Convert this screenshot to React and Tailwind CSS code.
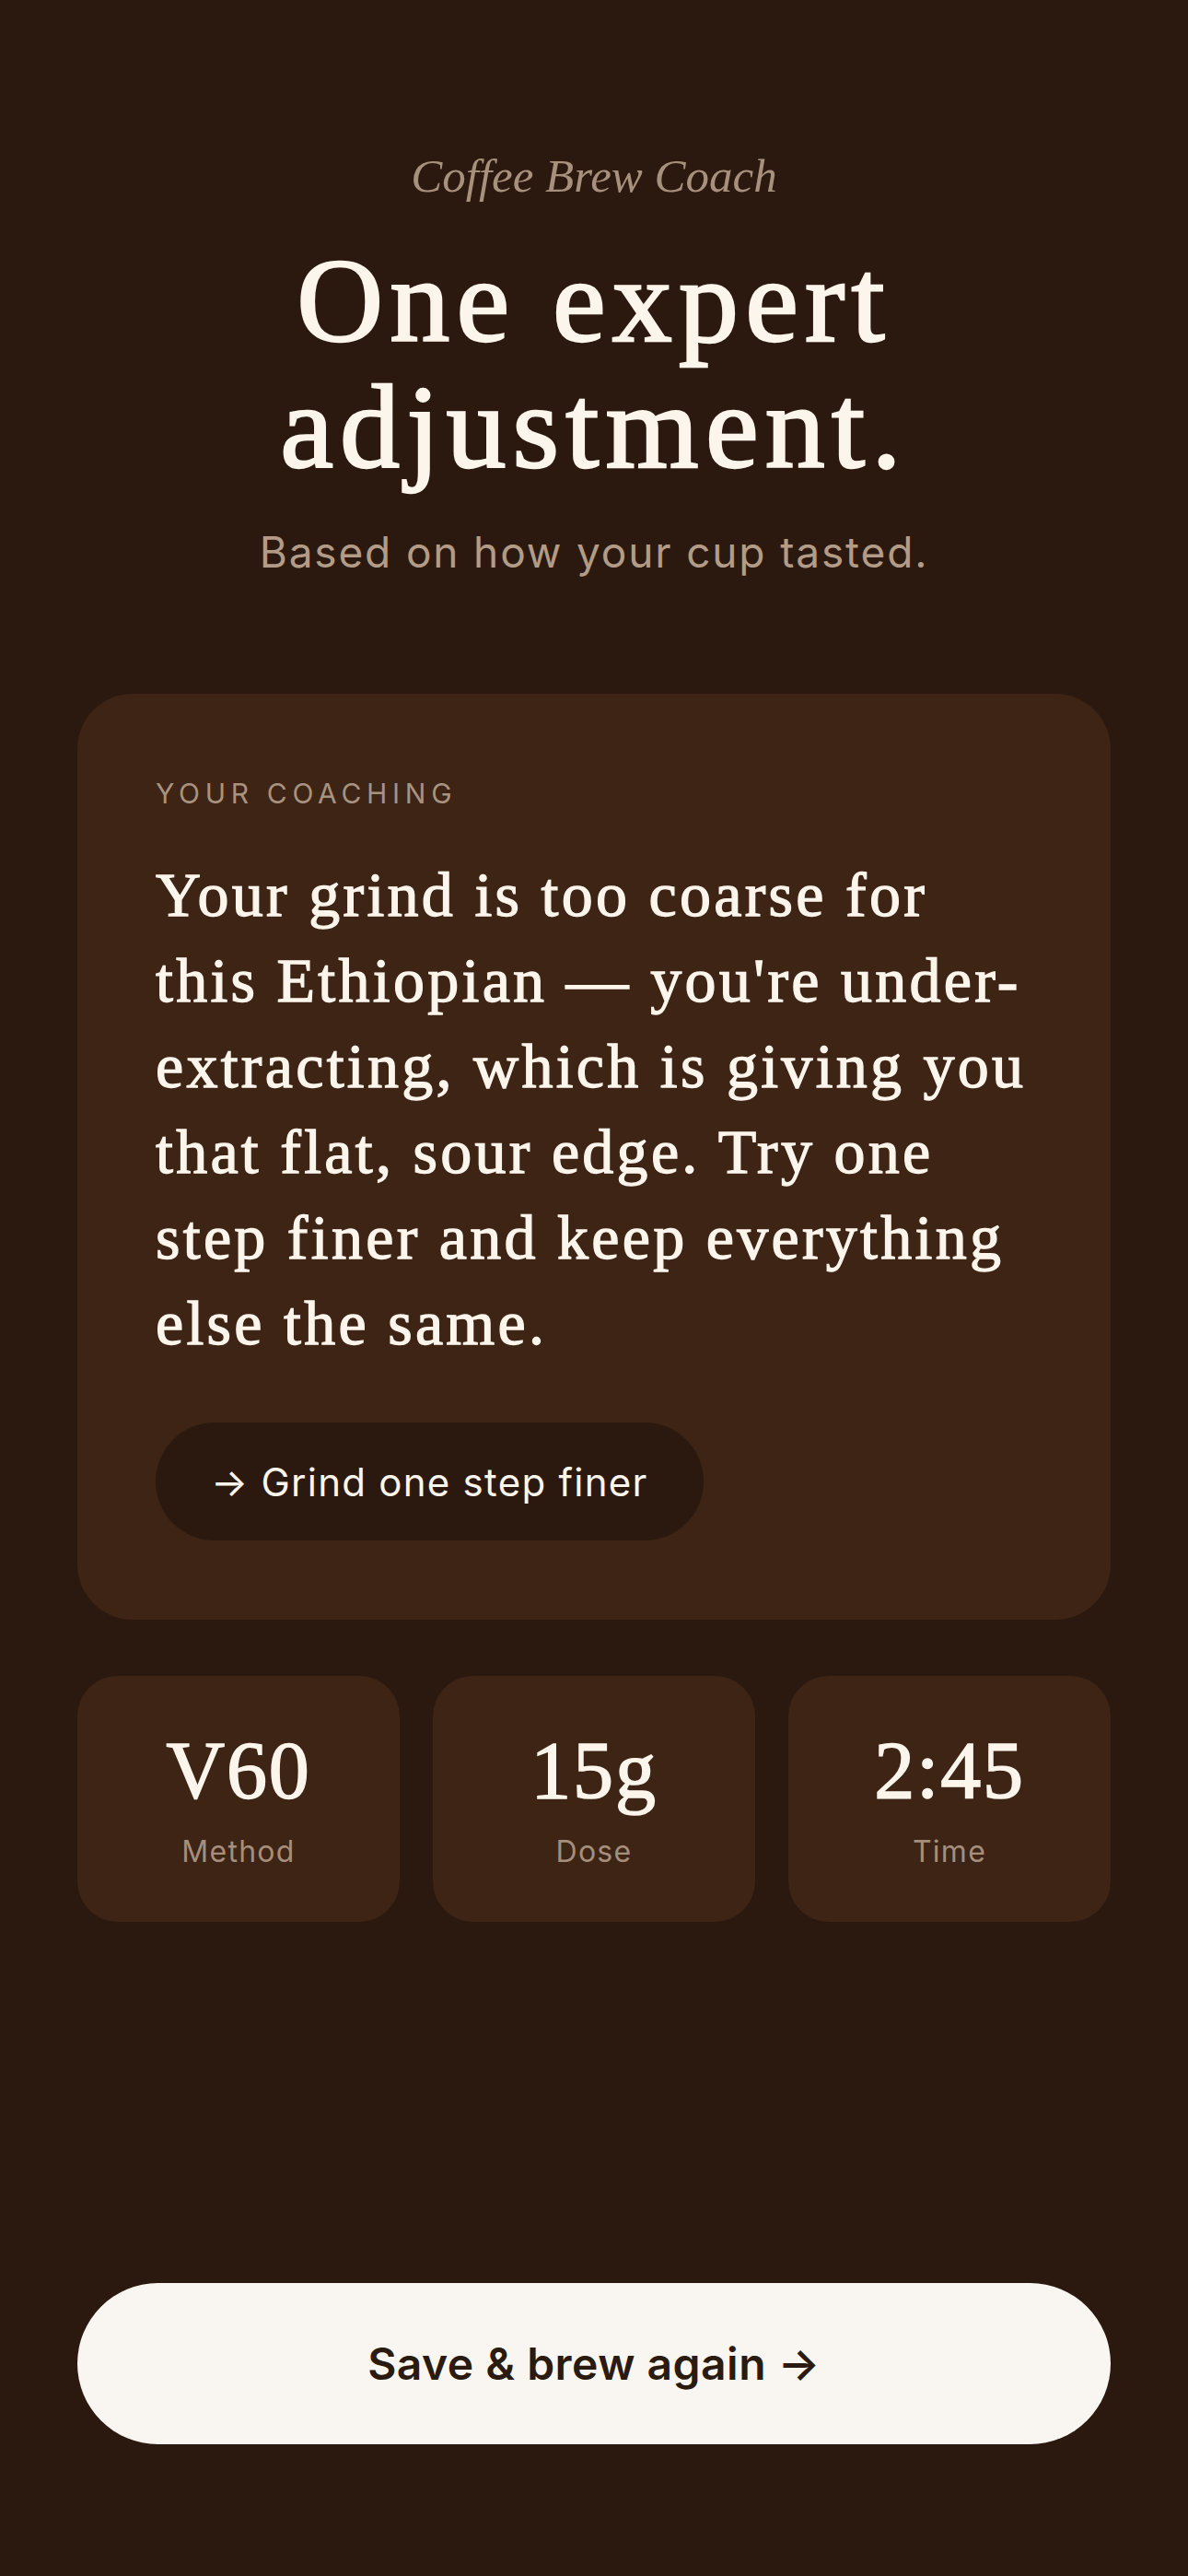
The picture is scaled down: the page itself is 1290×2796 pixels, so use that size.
import React from "react";

function Stat({ value, label }) {
  return (
    <div className="h-[267px] rounded-[44px] bg-[#3d2415] pt-[59px] flex flex-col items-center">
      <div className="font-['Liberation_Serif','DejaVu_Serif',serif] text-[88px] leading-[88px] text-[#fbf5ec] tracking-[0.02em] [-webkit-text-stroke:1.6px_#fbf5ec]">
        {value}
      </div>
      <div className="mt-[26px] font-['Inter',sans-serif] text-[32px] leading-[36px] tracking-[0.04em] text-[#a58f7c]">
        {label}
      </div>
    </div>
  );
}

export default function App() {
  const lines = [
    "Your grind is too coarse for",
    "this Ethiopian \u2014 you're under-",
    "extracting, which is giving you",
    "that flat, sour edge. Try one",
    "step finer and keep everything",
    "else the same.",
  ];
  return (
    <div className="min-h-screen w-full bg-[#2b190f] px-[84px] pt-[162px] pb-[143px] flex flex-col">
      <div className="text-center font-['Liberation_Serif','DejaVu_Serif',serif] italic text-[51px] leading-[58px] text-[#a8917c]">
        Coffee Brew Coach
      </div>
      <h1 className="mt-[38px] text-center font-['Liberation_Serif','DejaVu_Serif',serif] text-[130px] leading-[137px] tracking-[0.055em] text-[#fbf5ec] [-webkit-text-stroke:2.4px_#fbf5ec]">
        One expert
        <br />
        adjustment.
      </h1>
      <p className="mt-[40px] text-center font-['Inter',sans-serif] text-[46px] leading-[54px] tracking-[0.04em] text-[#b39c87]">
        Based on how your cup tasted.
      </p>

      <div className="mt-[127px] rounded-[60px] bg-[#3d2415] pt-[90px] pb-[86px] px-[85px]">
        <div className="font-['Inter',sans-serif] text-[30px] leading-[36px] tracking-[0.19em] text-[#a89280] uppercase">
          Your coaching
        </div>
        <div className="mt-[46px] font-['Liberation_Serif','DejaVu_Serif',serif] text-[68px] leading-[93px] tracking-[0.048em] text-[#fbf5ec] whitespace-nowrap [-webkit-text-stroke:1.3px_#fbf5ec]">
          {lines.map((l, i) => (
            <div key={i}>{l}</div>
          ))}
        </div>
        <div className="mt-[61px] inline-flex h-[128px] items-center rounded-full bg-[#2b190f] px-[60px] font-['Inter',sans-serif] text-[42px] tracking-[0.03em] text-[#fbf5ec]">
          → Grind one step finer
        </div>
      </div>

      <div className="mt-[61px] grid grid-cols-3 gap-[36px]">
        <Stat value="V60" label="Method" />
        <Stat value="15g" label="Dose" />
        <Stat value="2:45" label="Time" />
      </div>

      <button className="mt-auto h-[175px] w-full rounded-full bg-[#f9f6f1] font-['Inter',sans-serif] text-[48px] font-semibold tracking-[0.01em] text-[#2a1a10]">
        Save &amp; brew again →
      </button>
    </div>
  );
}
